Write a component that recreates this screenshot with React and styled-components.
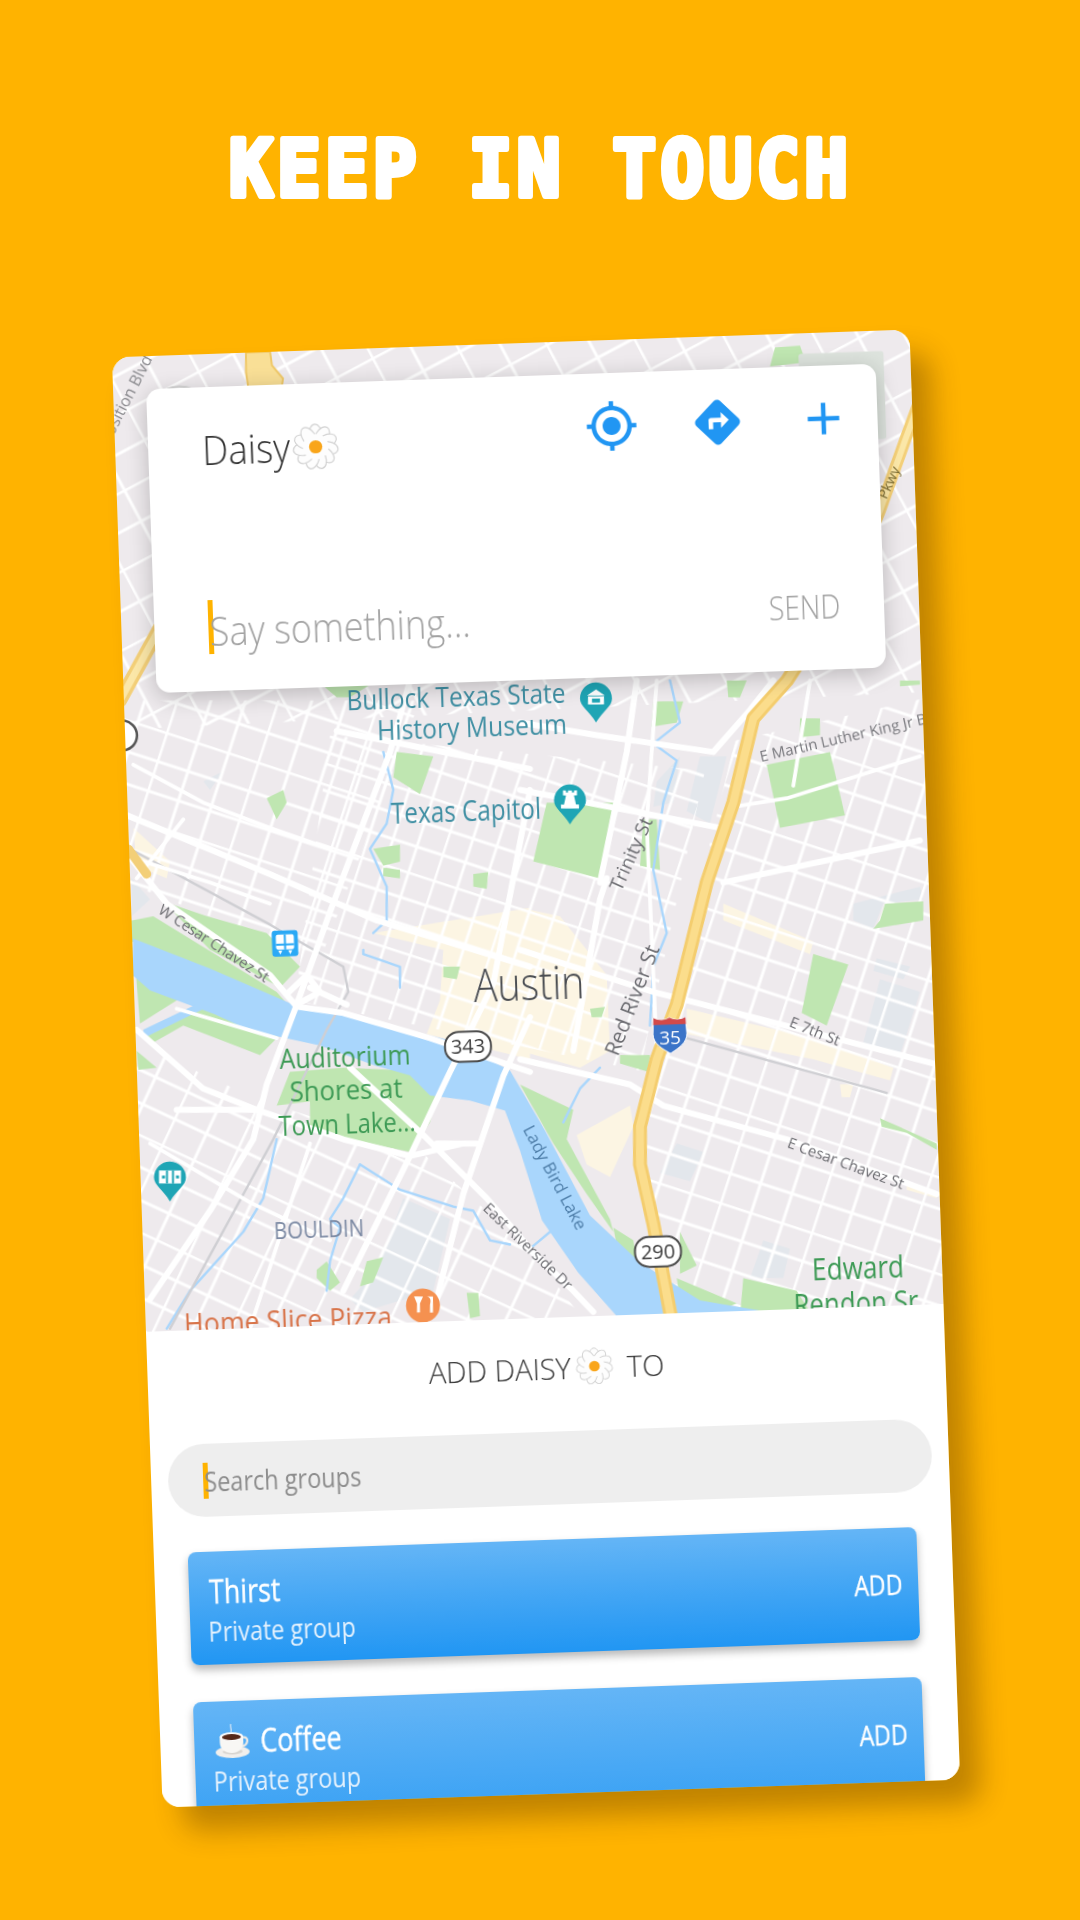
import React from 'react';
import styled, { createGlobalStyle } from 'styled-components';
import { MdGpsFixed, MdDirections, MdAdd } from 'react-icons/md';

const GlobalStyle = createGlobalStyle`
  html, body { margin: 0; padding: 0; background: #FFB300; }
  * { box-sizing: border-box; }
`;

const font = `"Open Sans", "Noto Sans", sans-serif`;

const Page = styled.div`
  width: 1080px;
  height: 1920px;
  overflow: hidden;
  background: #ffb300;
  padding-top: 117px;
  display: flex;
  flex-direction: column;
  align-items: center;
`;

const TitleArt = styled.svg`
  display: block;
  width: 720px;
  height: 100px;
  flex: none;
`;

const CardWrap = styled.div`
  position: relative;
  flex: none;
  width: 798px;
  height: 1451px;
  margin-top: 125.5px;
  margin-right: 8px;
  transform: rotate(-2deg);
  border-radius: 18px;
  box-shadow: 20px 24px 28px rgba(60, 30, 0, 0.32);
`;

const CardClip = styled.div`
  width: 100%;
  height: 100%;
  border-radius: 18px;
  overflow: hidden;
  background: #fff;
  font-family: ${font};
  display: flex;
  flex-direction: column;
  filter: blur(0.35px);
`;

const MapArea = styled.section`
  position: relative;
  flex: none;
  height: 975px;
  background: #eeeaed;
`;

const MapArt = styled.svg`
  display: block;
  width: 798px;
  height: 975px;
  filter: blur(0.5px);
`;

const Panel = styled.div`
  position: absolute;
  left: 33px;
  top: 33px;
  width: 730px;
  height: 304px;
  background: #fff;
  border-radius: 14px;
  box-shadow: 0 5px 22px rgba(0, 0, 0, 0.22);
  padding: 26px 27px 37px 54px;
  display: flex;
  flex-direction: column;
  justify-content: space-between;
`;

const PanelHead = styled.div`
  display: flex;
  justify-content: space-between;
  align-items: flex-start;
`;

const Contact = styled.div`
  display: flex;
  align-items: center;
  margin-top: 13px;
  font-size: 40px;
  font-weight: 300;
  line-height: 48px;
  color: #333;
`;

const Squeeze = styled.span`
  display: inline-block;
  transform: scaleX(${(p) => p.$x});
  transform-origin: ${(p) => p.$origin || 'left'} center;
  margin-right: ${(p) => p.$pull || 0}px;
  white-space: nowrap;
`;

const Actions = styled.div`
  display: flex;
  gap: 52px;
  color: #2196f3;
`;

const Composer = styled.div`
  display: flex;
  align-items: center;
  justify-content: space-between;
  height: 54px;
`;

const Caret = styled.span`
  flex: none;
  width: 5px;
  height: ${(p) => p.$h}px;
  background: #ffb300;
`;

const Prompt = styled.div`
  display: flex;
  align-items: center;
  font-size: 40px;
  font-weight: 300;
  color: #a2a2a2;
`;

const PromptText = styled(Squeeze)`
  margin-left: -4px;
  position: relative;
  top: 3px;
`;

const SendLabel = styled(Squeeze)`
  font-size: 33px;
  font-weight: 300;
  color: #a0a0a0;
  margin-right: 17px;
`;

const Sheet = styled.section`
  flex: 1;
  min-height: 0;
  background: #fff;
  padding-top: 30px;
`;

const SheetTitle = styled.h2`
  margin: 0;
  height: 40px;
  display: flex;
  justify-content: center;
  align-items: center;
  gap: 5px;
  font-size: 29px;
  font-weight: 300;
  color: #333;
`;

const SheetTitleTail = styled.span`
  margin-left: 8px;
`;

const SearchPill = styled.div`
  margin: 44px 0 0 17px;
  width: 764px;
  height: 73px;
  border-radius: 37px;
  background: #eee;
  display: flex;
  align-items: center;
  padding-left: 35px;
`;

const SearchText = styled(Squeeze)`
  margin-left: -4px;
  font-size: 28px;
  color: #8c8c8c;
`;

const Groups = styled.div`
  margin: 35px 35px 0 34px;
  display: flex;
  flex-direction: column;
  gap: 37px;
`;

const GroupCard = styled.article`
  height: ${(p) => p.$h}px;
  flex: none;
  border-radius: 8px;
  background: linear-gradient(180deg, #64b5f6 0%, #2196f3 100%);
  box-shadow: 0 5px 8px rgba(0, 0, 0, 0.28);
  padding: 18px 16px 0 20px;
  display: flex;
  justify-content: space-between;
  color: #fff;
`;

const GroupInfo = styled.div`
  display: flex;
  flex-direction: column;
`;

const GroupName = styled.div`
  display: flex;
  align-items: center;
  gap: 10px;
  height: 44px;
  font-size: 32px;
  font-weight: 400;
  line-height: 44px;
  -webkit-text-stroke: 0.4px #fff;
`;

const GroupMeta = styled.div`
  font-size: 27px;
  line-height: 36px;
  margin: 0 0 0 -2px;
  color: #e6f2fd;
`;

const AddLabel = styled(Squeeze)`
  font-size: 27px;
  font-weight: 400;
  line-height: 44px;
  height: 44px;
  margin-top: 17px;
  -webkit-text-stroke: 0.3px #fff;
`;

/* ---------- small drawings ---------- */
const Daisy = ({ size }) => (
  <svg width={size} height={size} viewBox="0 0 44 44" style={{ flex: 'none' }}>
    {Array.from({ length: 11 }).map((_, i) => (
      <ellipse key={i} cx="22" cy="10.500" rx="6" ry="9.600" fill="#fdfdfd" stroke="#d2d2d2" strokeWidth="1.100"
        transform={`rotate(${i * 32.73} 22 22)`} />
    ))}
    <circle cx="22" cy="22" r="12" fill="#fdfdfd" />
    <circle cx="22" cy="22" r="6.200" fill="#f9a51a" />
  </svg>
);

const CoffeeCup = () => (
  <svg width="36" height="36" viewBox="0 0 36 36" style={{ flex: 'none' }}>
    <path d="M17 1c-1 3 1 4 0 8" stroke="#cfe3f5" strokeWidth="1.300" fill="none" />
    <ellipse cx="18" cy="29" rx="17" ry="6" fill="#f1efec" />
    <ellipse cx="18" cy="28.500" rx="10" ry="3" fill="#d8d5d0" />
    <path d="M28 15c7-2 7 8-2 9" stroke="#eceae6" strokeWidth="2.200" fill="none" />
    <path d="M5.500 13h23.500v6c0 7-5 11-11.700 11S5.500 26 5.500 19z" fill="#f8f7f4" />
    <ellipse cx="17.300" cy="13.500" rx="11.700" ry="4.200" fill="#fff" />
    <ellipse cx="17.300" cy="14" rx="9.500" ry="3" fill="#55281a" />
  </svg>
);

/* ---------- map data (traced in crop space, converted to page px) ---------- */
const conv = (ox) => (s) =>
  s.trim().split(/\s+/).map((p) => {
    const [x, y] = p.split(',').map(Number);
    return `${(ox + x / 3).toFixed(1)},${(680 + y / 2.376).toFixed(1)}`;
  }).join(' ');
const L = conv(110);
const R = conv(520);

const PARKS = [
  L('160,525 290,560 470,600 570,680 510,730 420,690 300,640'),
  L('65,570 130,560 500,740 540,775 300,690 65,620'),
  L('75,670 250,735 90,815'),
  L('100,850 300,760 530,810 500,850 450,890 220,820 130,860'),
  L('80,880 140,920 85,925'),
  L('500,1010 540,930 700,920 1000,930 960,1050 900,1120 600,1070 600,1000'),
  L('470,280 520,260 530,290 500,330'),
  L('860,170 970,180 930,270 850,230'),
  L('790,400 870,390 870,430 820,440'),
  L('820,445 870,450 870,470 820,465'),
  L('1090,460 1135,455 1130,495 1090,490'),
  L('1000,680 1050,680 1040,710 1000,705'),
  L('620,1400 650,1380 690,1430 660,1450 620,1420'),
  L('770,1380 820,1370 790,1430 750,1440'),
  L('1070,1455 1105,1455 1110,1510 1080,1515'),
  L('620,0 800,0 720,40 680,40'),
  R('80,290 280,290 240,470 40,430'),
  R('400,50 490,50 470,100 395,110'),
  R('840,90 900,90 900,130 840,135'),
  R('740,200 930,170 975,320 780,350'),
  R('1080,570 1095,530 1210,525 1210,570 1060,590'),
  R('880,650 985,675 920,820 845,790'),
  R('1080,1040 1250,1100 1250,1115 1160,1075 1085,1060'),
  R('370,330 410,330 420,450 360,440'),
  R('210,780 255,775 245,800 215,800'),
  R('300,890 390,890 385,930 300,910'),
  R('280,1300 340,1330 350,1380 400,1470 300,1380'),
  R('480,1310 530,1390 480,1410'),
  R('0,960 160,1020 140,1090 270,1280 280,1310 200,1220 100,1100'),
  R('670,1420 830,1450 870,1500 660,1510'),
  R('470,1420 650,1480 560,1510 480,1470'),
  R('620,0 680,0 660,40 625,40'),
  R('1140,0 1200,0 1200,10 1140,14'),
  '775,347 800,345 806,362 770,366',
];

const GREYS = [
  R('500,310 540,180 620,180 570,340'),
  R('1000,530 1200,490 1210,520 1090,530 1060,590 1000,570'),
  R('1070,660 1170,680 1150,710 1060,690'),
  R('1080,710 1200,740 1140,890 1030,860'),
  R('420,1170 470,1100 550,1120 510,1190'),
  R('690,1420 730,1330 810,1350 790,1420'),
  L('800,1400 880,1230 1020,1280 970,1450 760,1500 720,1470'),
  L('65,470 120,520 65,560'),
  L('280,240 340,215 300,260'),
  R('410,240 480,180 460,290 400,300'),
];

const CREAMS = [
  L('790,600 1260,540 1260,900 950,840 990,760 1000,640'),
  R('0,540 120,560 260,700 270,880 180,920 0,880'),
  R('500,780 880,850 1120,920 1110,950 880,900 500,840'),
  R('610,530 880,620 870,650 610,570'),
  R('170,1080 330,1010 340,1060 270,1180 200,1150'),
  L('70,350 180,430 170,470 80,440'),
  R('960,960 1000,960 990,990 965,990'),
  R('1160,1190 1250,1220 1250,1230 1160,1210'),
];

const MAJOR = [
  L('60,420 170,530 480,700 560,775 700,790 960,850 1260,930'),
  R('0,900 330,960 430,1010 800,1090 1250,1220'),
  L('900,0 840,170 660,550 560,770 470,960 430,1090 300,1260 120,1470'),
  L('1260,260 1150,720 1020,930 900,1130 700,1450'),
  L('1260,800 1180,940 1060,1220 980,1470'),
  L('80,830 280,970 440,1020 700,1090 900,1130 1060,1100'),
  L('720,920 940,1080 1130,1230 1260,1350'),
  R('0,1330 160,1450 220,1500'),
  L('50,320 480,460 800,570 1260,680'),
  R('0,640 400,740 500,760 1240,910'),
  L('680,120 1000,170 1260,210'),
  R('0,100 230,130 580,170 690,70 760,0'),
  R('0,260 600,350'),
  R('610,480 1200,380'),
  L('530,745 590,700 630,740 560,770'),
  L('600,730 710,770'),
  R('240,480 320,170 350,0'),
  R('160,880 240,520 260,470'),
  L('200,1020 440,1020'),
  L('980,1100 1100,1100'),
];

const MEDIUM = [
  L('60,420 300,480 480,530'),
  L('70,200 280,290 480,350 660,400'),
  L('220,330 80,470'),
  R('410,0 380,340 410,880'),
  R('640,300 800,280 1200,180'),
  R('870,0 820,250'),
  L('200,780 500,850'),
  L('120,1100 420,1240 660,1330'),
  L('600,1100 420,1540'),
];

const CREEKS = [
  L('820,170 850,260 830,340 780,400 830,490 830,570 790,600'),
  L('760,640 760,650 870,680 870,730'),
  L('750,1150 700,1230 660,1280 690,1300 660,1380 650,1450'),
  L('750,1150 870,1210 1030,1250 1090,1260 1140,1330 1200,1340'),
  L('500,1090 460,1230 400,1310 240,1450 170,1540'),
  R('450,0 480,100 400,150 470,190 430,290 400,450 440,600 400,680 390,820'),
  R('130,1050 180,970 240,920'),
  R('30,1350 90,1310'),
];

const RAIL = [
  L('60,400 480,580 700,680 715,740 650,830 490,1090 180,1540'),
  R('500,850 1100,980'),
];

const LAKE = '133,938 210,968 293,1004 377,1022 450,1040 510,1070 545,1130 590,1215 640,1262 700,1300 760,1310 720,1325 625,1325 578,1272 542,1220 520,1150 505,1110 470,1100 430,1095 410,1075 375,1065 320,1045 250,1030 215,1014 150,990 133,975';

/* text, centre x, baseline y, size, colour, angle, fitted width, weight */
const LABELS = [
  ['Bullock Texas State', 456, 706, 28, '#3f8fa3', -2, 219],
  ['History Museum', 472, 737, 28, '#3f8fa3', -2, 190],
  ['Texas Capitol', 466, 821, 29, '#3f8fa3', -2, 150],
  ['Austin', 529, 1000, 46, '#4a4d52', -2, 111, 300],
  ['Auditorium', 345, 1066, 28, '#3d9a55', -2, 131],
  ['Shores at', 346, 1099, 28, '#3d9a55', -2, 113],
  ['Town Lake...', 347, 1133, 28, '#3d9a55', -2, 137],
  ['BOULDIN', 319, 1237, 24, '#7b89a3', -2, 90],
  ['Home Slice Pizza', 288, 1330, 30, '#d8744a', -2, 208],
  ['Edward', 858, 1278, 31, '#3d9a55', -2, 92],
  ['Rendon Sr', 856, 1313, 31, '#3d9a55', -2, 125],
  ['W Cesar Chavez St', 214, 948, 15, '#6b6b70', 33],
  ['East Riverside Dr', 528, 1251, 15, '#6b6b70', 44],
  ['Lady Bird Lake', 555, 1183, 17, '#4d7da8', 62],
  ['Trinity St', 631, 860, 19, '#6b6b70', -66],
  ['Red River St', 632, 1007, 21, '#6b6b70', -69],
  ['E Martin Luther King Jr Blvd', 853, 740, 15, '#77777c', -13],
  ['E 7th St', 815, 1036, 15, '#6b6b70', 22],
  ['E Cesar Chavez St', 846, 1168, 15, '#6b6b70', 20],
  ['Exposition Blvd', 122, 412, 16, '#8a8a8e', -63],
  ['Pkwy', 889, 487, 14, '#7a6a30', -65],
];

const Pin = ({ x, y, color = '#1fa5b5', children }) => (
  <g transform={`translate(${x} ${y})`}>
    <path d="M-16 0a16 16 0 1 1 32 0c0 8-9 12-16 24c-7-12-16-16-16-24z" fill={color} />
    {children}
  </g>
);

const Shield = ({ x, y, text, w }) => (
  <g transform={`translate(${x} ${y}) rotate(-2)`}>
    <rect x={-w / 2} y="-15" width={w} height="30" rx="14" fill="#fff" stroke="#4b4b4b" strokeWidth="2" />
    <text x="0" y="7" textAnchor="middle" fontSize="20" fill="#3b3b3b" fontFamily={font}>{text}</text>
  </g>
);

const lineProps = { fill: 'none', strokeLinejoin: 'round', strokeLinecap: 'round' };

const CityMap = () => (
  <MapArt viewBox="0 0 798 975" fontFamily={font}>
    <defs>
      <pattern id="gridA" width="96" height="92" patternUnits="userSpaceOnUse" patternTransform="rotate(18)">
        <path d="M1 0V92M33 0V92M66 0V92M0 1H96M0 31H96M0 62H96" stroke="#fff" strokeWidth="3" />
      </pattern>
      <pattern id="gridD" width="76" height="78" patternUnits="userSpaceOnUse" patternTransform="rotate(18)">
        <path d="M1 0V78M25 0V78M50 0V78M0 1H76M0 27H76M0 52H76" stroke="#fff" strokeWidth="2.800" />
      </pattern>
      <pattern id="gridB" width="70" height="88" patternUnits="userSpaceOnUse" patternTransform="rotate(25)">
        <path d="M1 0V88M36 0V88M0 1H70M0 30H70M0 60H70" stroke="#fff" strokeWidth="3" />
      </pattern>
      <pattern id="gridC" width="80" height="70" patternUnits="userSpaceOnUse" patternTransform="rotate(-28)">
        <path d="M1 0V70M40 0V70M0 1H80M0 36H80" stroke="#fff" strokeWidth="3" />
      </pattern>
    </defs>
    <g transform="translate(399 725.5) rotate(2) translate(-536 -1068)">
      {GREYS.map((p) => <polygon key={p} points={p} fill="#e3e7ec" />)}
      {CREAMS.map((p) => <polygon key={p} points={p} fill="#fcf5e3" />)}
      <polygon points="330,735 705,770 640,1070 295,1000" fill="url(#gridD)" />
      <polygon points="735,740 960,690 980,1320 660,1340 640,1130" fill="url(#gridA)" />
      <polygon points="110,700 420,700 320,960 120,880" fill="url(#gridA)" />
      <polygon points="130,1040 260,1100 420,1150 530,1250 600,1340 130,1350" fill="url(#gridB)" />
      <polygon points="100,330 940,310 960,690 100,730" fill="url(#gridC)" />
      {PARKS.map((p) => <polygon key={p} points={p} fill="#bfe6b1" />)}
      <polygon points={LAKE} fill="#a9d6fc" />
      <polygon points={L('100,830 310,750 320,765 100,850')} fill="#a9d6fc" />
      {CREEKS.map((p) => <polyline key={p} points={p} stroke="#a9d6fc" strokeWidth="2.400" {...lineProps} />)}
      {RAIL.map((p) => <polyline key={p} points={p} stroke="#cfcfd3" strokeWidth="2.400" {...lineProps} />)}
      {MEDIUM.map((p) => <polyline key={p} points={p} stroke="#fff" strokeWidth="3.800" {...lineProps} />)}
      {MAJOR.map((p) => <polyline key={p} points={p} stroke="#fff" strokeWidth="6" {...lineProps} />)}
      <polygon points="246,352 270,351 272,365 283,378 281,392 249,392 246,372" fill="#f9df96" stroke="#efc868" strokeWidth="2" />
      <polyline points="925,385 905,440 880,510 860,560" stroke="#f3cf78" strokeWidth="12" {...lineProps} />
      <polyline points="925,385 905,440 880,510 860,560" stroke="#fbe7a8" strokeWidth="6" {...lineProps} />
      <polyline points="175,600 150,645 120,700" stroke="#f3cf78" strokeWidth="14" {...lineProps} />
      <polyline points="175,600 150,645 120,700" stroke="#fbe7a8" strokeWidth="7" {...lineProps} />
      <polyline points={L('55,400 110,460')} stroke="#f3cf78" strokeWidth="9" {...lineProps} />
      <polyline points={`800,660 787,680 ${R('700,90 640,290 560,480 470,770 410,900 360,1060 360,1150 400,1290 450,1500 470,1580')}`} stroke="#f4cd6e" strokeWidth="14" {...lineProps} />
      <polyline points={`800,660 787,680 ${R('700,90 640,290 560,480 470,770 410,900 360,1060 360,1150 400,1290 450,1500 470,1580')}`} stroke="#fbdd8c" strokeWidth="8" {...lineProps} />

      {/* peeking controls behind the panel */}
      <circle cx="180" cy="418" r="32" fill="#f4f4f4" stroke="#d6d6d6" strokeWidth="2" />
      <rect x="800" y="352" width="85" height="88" rx="3" fill="#dde3dd" transform="rotate(-2 842 398)" />
      <circle cx="122" cy="735" r="15" fill="#fff" stroke="#555" strokeWidth="2.500" />

      {LABELS.map(([t, x, y, s, c, r, w, wt]) => (
        <text key={t} x={x} y={y} fontSize={s} fill={c} textAnchor="middle" fontWeight={wt || 400}
          textLength={w} lengthAdjust={w ? 'spacingAndGlyphs' : undefined}
          transform={`rotate(${r} ${x} ${y - s * 0.35})`}>{t}</text>
      ))}

      <Pin x={596} y={698}>
        <path d="M-9 -3L0 -9L9 -3ZM-8 -2h16v8h-16z" fill="#fff" />
        <rect x="-4" y="0" width="8" height="4" fill="#1fa5b5" />
      </Pin>
      <Pin x={570} y={800}>
        <path d="M-7 -10h3v2h2v-2h4v2h2v-2h3v5h-3l2 9h3v4h-18v-4h3l2-9h-3z" fill="#fff" />
      </Pin>
      <Pin x={170} y={1177}>
        <path d="M-11 -7h22v13h-22z" fill="#fff" />
        <path d="M-4 -7h2v13h-2zM2 -7h2v13h-2z M-8 -2h3v3h-3z M6 -2h3v3h-3z" fill="#1fa5b5" />
      </Pin>
      <circle cx="423" cy="1305" r="17" fill="#f59150" />
      <path d="M414 1296l3 7v9h3v-9l3-7M427 1296c4 1 4 5 3 8v8h3v-16z" fill="#fff" />

      <g transform="translate(285 943) rotate(-2)">
        <rect x="-13" y="-13" width="26" height="26" rx="3" fill="#2ba9f5" />
        <rect x="-9" y="-9" width="18" height="15" rx="2" fill="#fff" />
        <rect x="-1" y="-9" width="2" height="15" fill="#2ba9f5" />
        <rect x="-9" y="0" width="18" height="2" fill="#2ba9f5" />
        <path d="M-7 7h4l-2 4zM7 7h-4l2 4z" fill="#fff" />
      </g>
      <Shield x={468} y={1046} text="343" w={46} />
      <Shield x={658} y={1251} text="290" w={46} />
      <g transform="translate(670 1035) rotate(-2)">
        <path d="M-16 -18c5 3 11 3 16 0c5 3 11 3 16 0l1 16c0 10-9 15-17 20c-8-5-17-10-17-20z" fill="#3b74c8" stroke="#fff" strokeWidth="1" />
        <path d="M-16 -18c5 3 11 3 16 0c5 3 11 3 16 0l0.400 7h-32.800z" fill="#d34a4a" />
        <text x="0" y="9" textAnchor="middle" fontSize="19" fill="#fff" fontFamily={font}>35</text>
      </g>
    </g>
  </MapArt>
);

const Group = ({ icon, name, height }) => (
  <GroupCard $h={height}>
    <GroupInfo>
      <GroupName>{icon}<Squeeze $x={0.84} $pull={-12}>{name}</Squeeze></GroupName>
      <GroupMeta><Squeeze $x={0.87}>Private group</Squeeze></GroupMeta>
    </GroupInfo>
    <AddLabel $x={0.86} $origin="right">ADD</AddLabel>
  </GroupCard>
);

export default function App() {
  return (
    <Page>
      <GlobalStyle />
      <TitleArt viewBox="0 0 720 100" role="img" aria-label="Keep in touch">
        <text
          transform="translate(49 79) scale(0.93 1)"
          fontFamily="'DejaVu Sans Mono', monospace"
          fontWeight="700"
          fontSize="78"
          letterSpacing="4.600"
          fill="#fff"
          stroke="#fff"
          strokeWidth="6"
          strokeLinejoin="round"
        >
          KEEP IN TOUCH
        </text>
      </TitleArt>
      <CardWrap>
        <CardClip>
          <MapArea>
            <CityMap />
            <Panel>
              <PanelHead>
                <Contact><Squeeze $x={0.92} $pull={-5}>Daisy</Squeeze><Daisy size={47} /></Contact>
                <Actions>
                  <MdGpsFixed size={54} />
                  <MdDirections size={54} />
                  <MdAdd size={54} />
                </Actions>
              </PanelHead>
              <Composer>
                <Prompt>
                  <Caret $h={54} />
                  <PromptText $x={0.9}>Say something...</PromptText>
                </Prompt>
                <SendLabel $x={0.86} $origin="right">SEND</SendLabel>
              </Composer>
            </Panel>
          </MapArea>
          <Sheet>
            <SheetTitle>
              ADD DAISY<Daisy size={38} /><SheetTitleTail>TO</SheetTitleTail>
            </SheetTitle>
            <SearchPill>
              <Caret $h={36} />
              <SearchText $x={0.84}>Search groups</SearchText>
            </SearchPill>
            <Groups>
              <Group name="Thirst" height={113} />
              <Group icon={<CoffeeCup />} name="Coffee" height={190} />
            </Groups>
          </Sheet>
        </CardClip>
      </CardWrap>
    </Page>
  );
}
